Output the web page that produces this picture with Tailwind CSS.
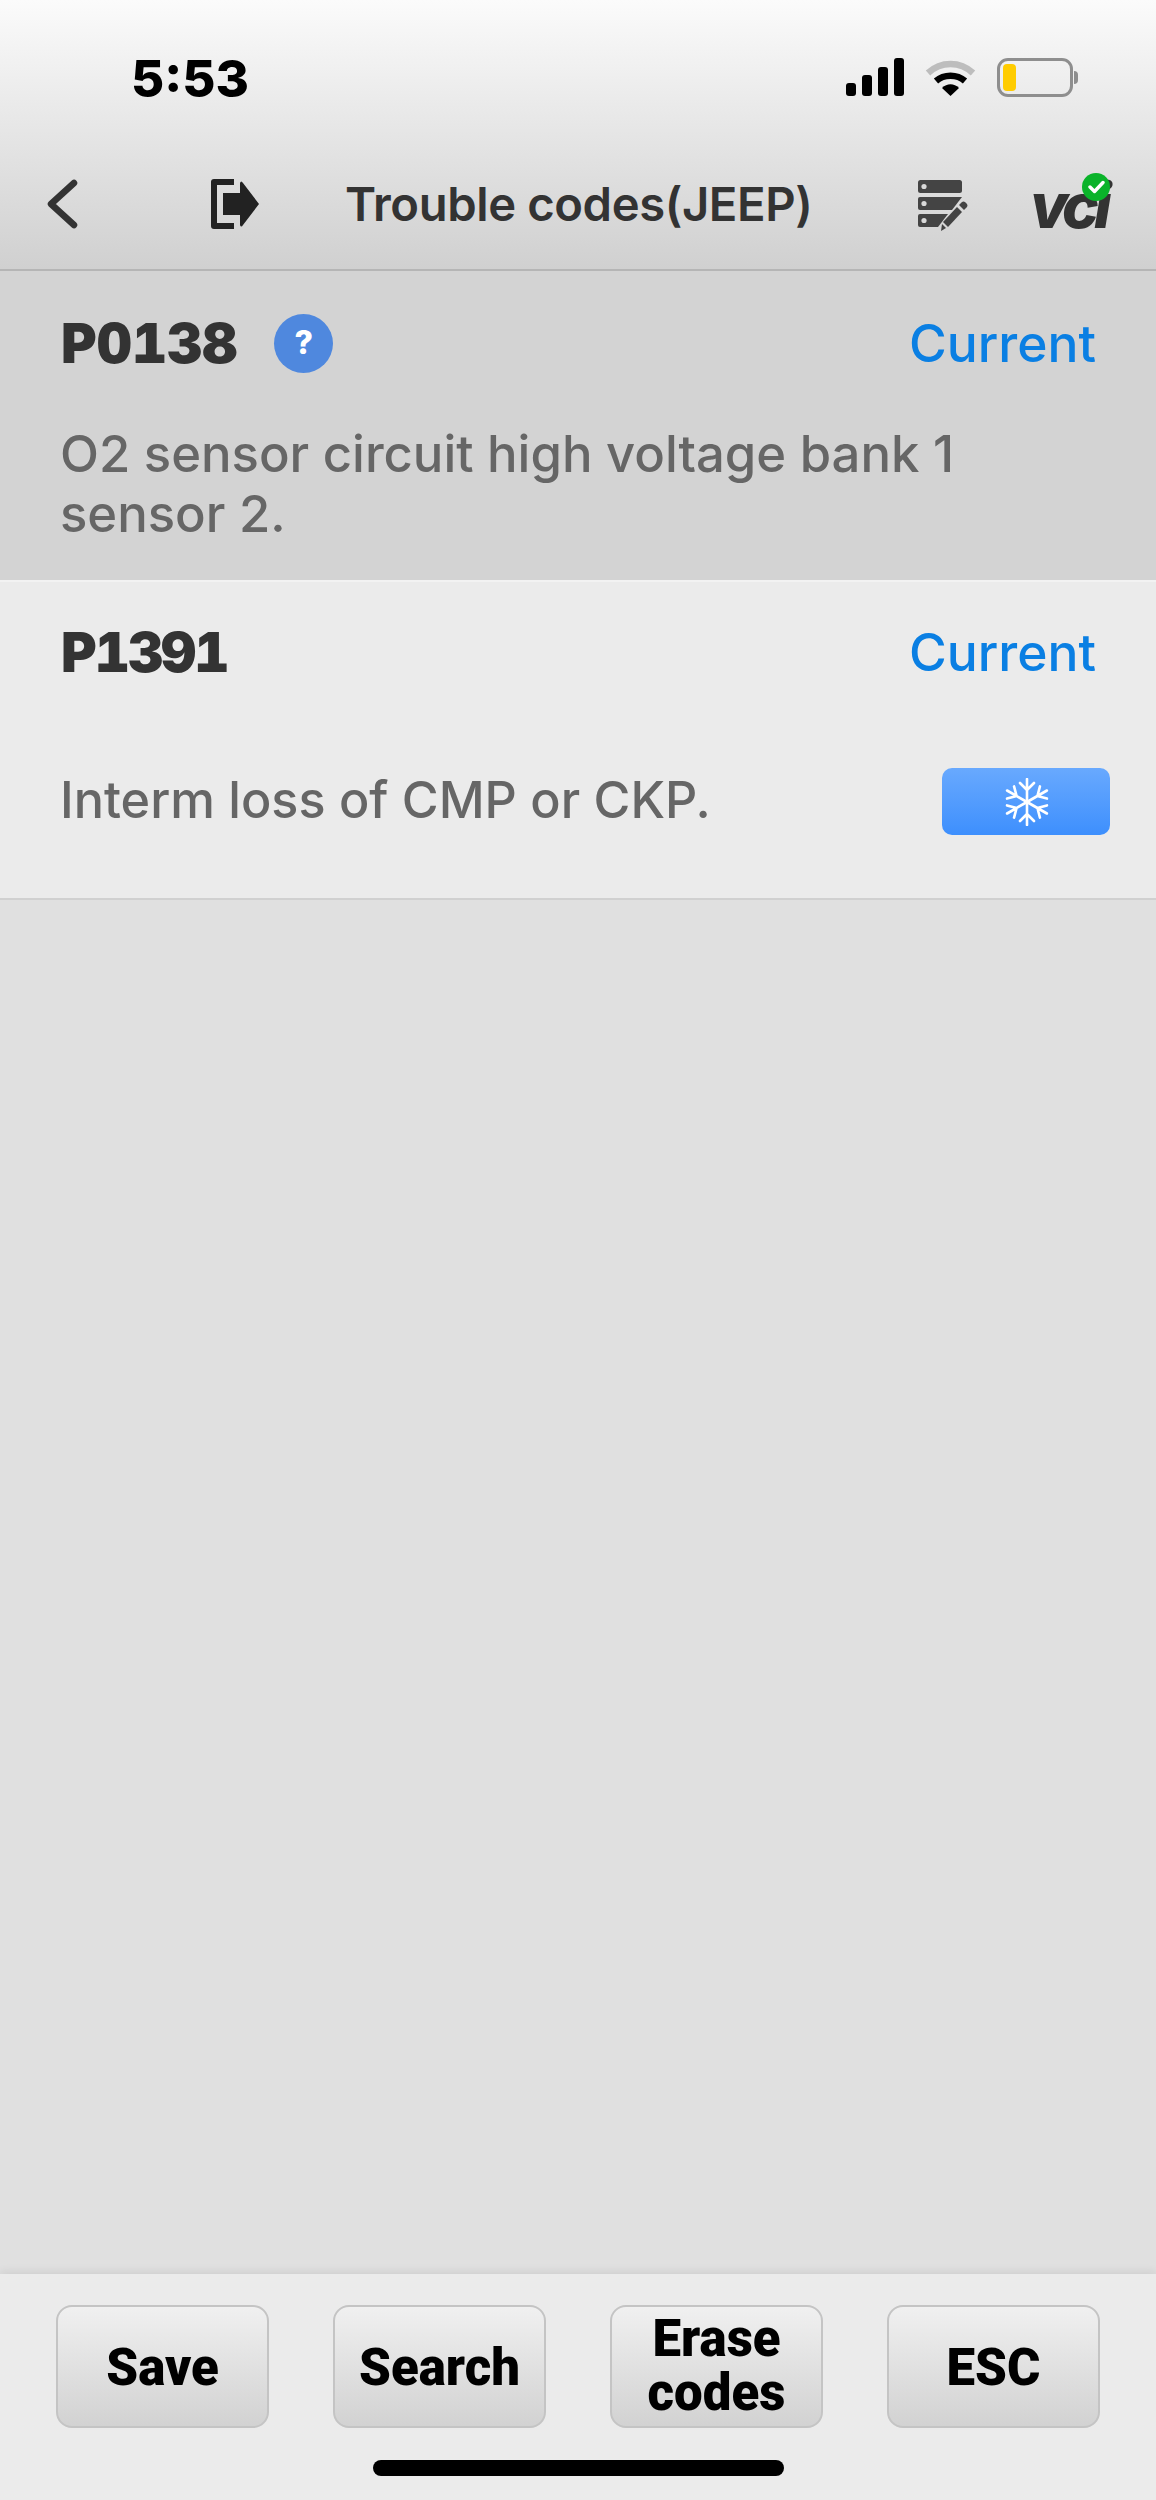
<!DOCTYPE html>
<html lang="en">
<head>
  <meta charset="UTF-8" />
  <meta name="viewport" content="width=device-width, initial-scale=1.0" />
  <title>Trouble codes</title>
  <script src="https://cdn.jsdelivr.net/npm/@tailwindcss/browser@4"></script>
</head>
<body class="bg-[#e0e0e0] font-['Inter',sans-serif]">
  <div class="flex flex-col w-[1156px] h-[2500px] overflow-hidden">

    <!-- Header -->
    <header class="h-[271px] shrink-0 bg-gradient-to-b from-[#fbfbfb] to-[#d0d0d0] border-b-2 border-[#b5b5b5]">
      <div class="flex items-center h-[154px] pl-[131px] pr-[78px]">
        <span class="mt-[2px] text-[51px] font-extrabold text-black leading-none">5:53</span>
        <div class="ml-auto flex items-center">
          <svg width="59" height="38" viewBox="0 0 59 38" fill="#000">
            <rect x="0" y="25" width="10" height="13" rx="3" />
            <rect x="16" y="17" width="10" height="21" rx="3" />
            <rect x="32" y="9" width="10" height="29" rx="3" />
            <rect x="48" y="0" width="10" height="38" rx="3" />
          </svg>
          <svg class="ml-[20px]" width="51" height="38" viewBox="0 0 51 38" fill="none">
            <path d="M3 15 C16 3 35 3 48 15" stroke="#bdbdbd" stroke-width="6.5" />
            <path d="M11 23 C19 16 32 16 40 23" stroke="#000" stroke-width="6.5" />
            <path d="M17 30 C22 25 29 25 34 30 L25.5 38 Z" fill="#000" />
          </svg>
          <div class="ml-[21px] flex items-center">
            <div class="w-[76px] h-[39px] border-[3px] border-[#8e8e8e] rounded-[11px] p-[3px]">
              <div class="w-[13px] h-full bg-[#ffcc00] rounded-[4px]"></div>
            </div>
            <div class="w-[4px] h-[13px] bg-[#8e8e8e] rounded-r-full ml-[1px]"></div>
          </div>
        </div>
      </div>
      <nav class="flex items-center h-[115px] pl-[46px] pr-[51px] pb-[16px]">
        <div class="w-[299px] flex items-center">
          <svg width="32" height="50" viewBox="0 0 32 50" fill="none">
            <path d="M28 4 L5 25 L28 46" stroke="#333" stroke-width="6.5" stroke-linecap="round" stroke-linejoin="round" />
          </svg>
          <svg class="ml-[131px]" width="50" height="50" viewBox="0 0 50 50">
            <path d="M25 3 H5 V47 H25" fill="none" stroke="#222" stroke-width="6" stroke-linejoin="round" />
            <path d="M14 14 H31 V4 Q32 1 34 4 L50 25 L34 46 Q32 49 31 46 V36 H14 Z" fill="#222" />
          </svg>
        </div>
        <h1 class="text-[47.200px] font-semibold text-[#333] leading-none tracking-[-0.4px] whitespace-nowrap">Trouble codes(JEEP)</h1>
        <div class="ml-auto flex items-center">
          <svg class="mt-[2px]" width="50" height="54" viewBox="0 0 50 54">
            <g fill="#444">
              <rect x="0" y="2" width="44" height="13" rx="2.5" />
              <path d="M2 19 H44 L34 32 H2 Q0 32 0 30 V21 Q0 19 2 19 Z" />
              <path d="M2 36 H30 L20 49 H2 Q0 49 0 47 V38 Q0 36 2 36 Z" />
              <path d="M25 44 L39 29 L44 34 L30 49 Z" />
              <path d="M41 27 L44 24 Q45.5 23 47 24 L49 26 Q50 27.500 49 29 L46 32 Z" />
              <path d="M24 46 L28 50 L23 53 Z" />
            </g>
            <g fill="#d8d8d8">
              <circle cx="6" cy="8.500" r="2.600" />
              <circle cx="6" cy="25.500" r="2.600" />
              <circle cx="6" cy="42.500" r="2.600" />
            </g>
          </svg>
          <div class="relative ml-[62px] w-[75px] h-[60px]">
            <span class="absolute bottom-[-3px] left-0 text-[62px] leading-none font-extrabold italic text-[#333] tracking-[-5px]">vci</span>
            <span class="absolute right-[-5px] top-[-1px] w-[28px] h-[28px] rounded-full bg-[#0ab32a] flex items-center justify-center">
              <svg width="17" height="14" viewBox="0 0 17 14" fill="none">
                <path d="M2 7 L6.500 11.500 L15 2.500" stroke="#fff" stroke-width="3.400" stroke-linecap="round" stroke-linejoin="round" />
              </svg>
            </span>
          </div>
        </div>
      </nav>
    </header>

    <!-- Code rows -->
    <section class="h-[311px] shrink-0 bg-[#d3d3d3] border-b-2 border-[#f2f2f2] px-[61px]">
      <div class="flex items-center justify-between h-[144px]">
        <div class="flex items-center">
          <span class="text-[54.500px] font-black tabular-nums text-[#333] leading-none">P0138</span>
          <span class="ml-[37px] w-[59px] h-[59px] rounded-full bg-[#4f88de] text-white text-[32px] font-extrabold flex items-center justify-center">?</span>
        </div>
        <span class="mt-[2px] text-[51.500px] font-[550] text-[#0a7fe3] leading-none mr-[-1px]">Current</span>
      </div>
      <p class="mt-[9px] ml-[-1px] text-[50.800px] leading-[60px] font-[550] text-[#666] w-[960px]">O2 sensor circuit high voltage bank 1 sensor 2.</p>
    </section>

    <section class="h-[318px] shrink-0 bg-[#ebebeb] border-b-2 border-[#d0d0d0] px-[61px]">
      <div class="flex items-center justify-between h-[140px]">
        <span class="text-[54.500px] font-black tabular-nums tracking-[-2px] text-[#333] leading-none">P1391</span>
        <span class="mt-[2px] text-[51.500px] font-[550] text-[#0a7fe3] leading-none mr-[-1px]">Current</span>
      </div>
      <div class="flex items-center justify-between h-[156px] mr-[-15px]">
        <p class="ml-[-1px] text-[50.300px] font-[550] text-[#666] leading-none">Interm loss of CMP or CKP.</p>
        <button class="mt-[3px] w-[168px] h-[67px] rounded-[10px] bg-gradient-to-b from-[#68a9fe] to-[#3d8ffd] flex items-center justify-center">
          <svg class="ml-[2px]" width="46" height="48" viewBox="-23 -24 46 48" fill="none" stroke="#fff" stroke-width="2.600" stroke-linecap="round" stroke-linejoin="round">
            <path d="M0 0 V-23 M-7 -19 L0 -12 L7 -19" />
            <path transform="rotate(60)" d="M0 0 V-23 M-7 -19 L0 -12 L7 -19" />
            <path transform="rotate(120)" d="M0 0 V-23 M-7 -19 L0 -12 L7 -19" />
            <path transform="rotate(180)" d="M0 0 V-23 M-7 -19 L0 -12 L7 -19" />
            <path transform="rotate(240)" d="M0 0 V-23 M-7 -19 L0 -12 L7 -19" />
            <path transform="rotate(300)" d="M0 0 V-23 M-7 -19 L0 -12 L7 -19" />
          </svg>
        </button>
      </div>
    </section>

    <main class="flex-1 bg-[#e0e0e0]"></main>

    <!-- Footer -->
    <footer class="relative h-[226px] shrink-0 bg-[#ebebeb] shadow-[0_-3px_8px_rgba(0,0,0,0.07)] pt-[31px]">
      <div class="flex justify-between px-[56px] font-['Roboto',sans-serif] text-[51px] leading-[54px] font-black text-black text-center">
        <button class="w-[213px] h-[123px] pt-[2px] rounded-[16px] border-2 border-[#c4c4c4] bg-gradient-to-b from-[#f0f0f0] to-[#d2d2d2]">Save</button>
        <button class="w-[213px] h-[123px] pt-[2px] rounded-[16px] border-2 border-[#c4c4c4] bg-gradient-to-b from-[#f0f0f0] to-[#d2d2d2]">Search</button>
        <button class="w-[213px] h-[123px] pb-[1px] rounded-[16px] border-2 border-[#c4c4c4] bg-gradient-to-b from-[#f0f0f0] to-[#d2d2d2]">Erase<br />codes</button>
        <button class="w-[213px] h-[123px] pt-[2px] rounded-[16px] border-2 border-[#c4c4c4] bg-gradient-to-b from-[#f0f0f0] to-[#d2d2d2]">ESC</button>
      </div>
      <div class="absolute left-[373px] bottom-[24px] w-[411px] h-[16px] rounded-full bg-black"></div>
    </footer>
  </div>
</body>
</html>
